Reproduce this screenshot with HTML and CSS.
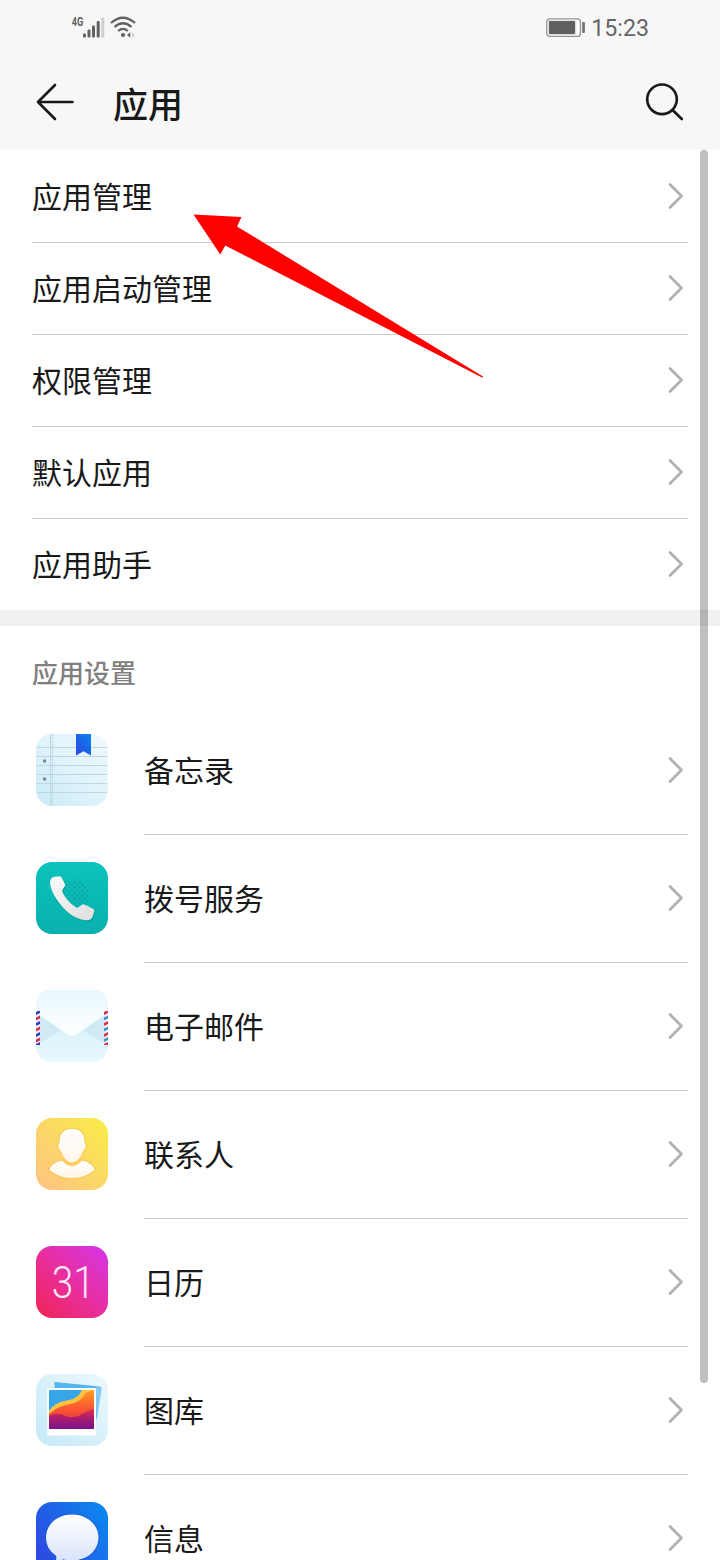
FILE: index.html
```html
<!DOCTYPE html>
<html lang="zh-CN">
<head>
    <meta charset="UTF-8">
    <meta name="viewport" content="width=device-width, initial-scale=1.0">
    <title>应用</title>
    <link rel="stylesheet" href="styles.css">
</head>
<body>
    <div class="status-bar">
        <svg class="signal" width="66" height="26" viewBox="0 0 66 26">
            <text x="1.7" y="12" class="network" textLength="11.5" lengthAdjust="spacingAndGlyphs">4G</text>
            <g fill="#626262">
                <rect x="13" y="19.5" width="3" height="4" rx="1"/>
                <rect x="17.5" y="15.5" width="3" height="8" rx="1"/>
                <rect x="22" y="11.5" width="3" height="12" rx="1"/>
                <rect x="26.7" y="7" width="3" height="16.5" rx="1"/>
            </g>
            <rect x="31.3" y="3.5" width="3" height="20" rx="1" fill="#cfcfcf"/>
            <g fill="none" stroke="#626262" stroke-width="2.3">
                <path d="M41 9Q53 -1.5 65 9"/>
                <path d="M44.5 13Q53 5.5 61.5 13"/>
                <path d="M48.2 17Q53 12.7 57.8 17"/>
            </g>
            <circle cx="53" cy="21" r="2.100" fill="#626262"/>
            <path d="M60.3 18.3v5.4L57 21z" fill="#626262"/>
            <path d="M62 18.3v5.4L65 21z" fill="#cfcfcf"/>
        </svg>
        <div class="status-right">
            <svg width="40" height="20" viewBox="0 0 40 20">
                <rect x=".8" y=".8" width="33.6" height="17.6" rx="3" fill="#fff" stroke="#929292" stroke-width="1.3"/>
                <rect x="2.3" y="2.3" width="28" height="14.6" rx="1" fill="#dcdcdc"/>
                <rect x="3" y="3" width="26" height="13" rx="1" fill="#606060"/>
                <rect x="36.2" y="4" width="2.7" height="11" rx="1" fill="#707070"/>
            </svg>
            <span class="time">15:23</span>
        </div>
    </div>

    <div class="header">
        <svg class="back" width="38" height="38" viewBox="0 0 38 38">
            <path d="M36.5 19H2M19 2L2 19l17 17" fill="none" stroke="#191919" stroke-width="2.6" stroke-linecap="round" stroke-linejoin="round"/>
        </svg>
        <h1>应用</h1>
        <svg class="search" width="40" height="40" viewBox="0 0 40 40">
            <circle cx="17" cy="17.3" r="14.8" fill="none" stroke="#191919" stroke-width="2.7"/>
            <path d="M27.5 28l9.3 9" fill="none" stroke="#191919" stroke-width="2.7" stroke-linecap="round"/>
        </svg>
    </div>

    <div class="menu">
        <div class="row"><span>应用管理</span><svg class="chevron" viewBox="0 0 16 28"><path d="M2 2.5L13.5 14 2 25.5"/></svg></div>
        <div class="row"><span>应用启动管理</span><svg class="chevron" viewBox="0 0 16 28"><path d="M2 2.5L13.5 14 2 25.5"/></svg></div>
        <div class="row"><span>权限管理</span><svg class="chevron" viewBox="0 0 16 28"><path d="M2 2.5L13.5 14 2 25.5"/></svg></div>
        <div class="row"><span>默认应用</span><svg class="chevron" viewBox="0 0 16 28"><path d="M2 2.5L13.5 14 2 25.5"/></svg></div>
        <div class="row"><span>应用助手</span><svg class="chevron" viewBox="0 0 16 28"><path d="M2 2.5L13.5 14 2 25.5"/></svg></div>
    </div>

    <div class="divider"></div>
    <h2>应用设置</h2>

    <div class="apps">
        <div class="app">
            <svg class="icon" viewBox="0 0 72 72">
                <defs>
                    <linearGradient id="memo" x1="1" y1="0" x2="0" y2="1"><stop offset="0" stop-color="#f0f9fd"/><stop offset=".5" stop-color="#dff3fb"/><stop offset="1" stop-color="#c8ebf8"/></linearGradient>
                    <linearGradient id="mark" x1="1" y1="0" x2="0" y2="1"><stop offset="0" stop-color="#0a84ef"/><stop offset="1" stop-color="#2d45df"/></linearGradient>
                </defs>
                <rect width="72" height="72" rx="16" fill="url(#memo)"/>
                <path d="M1 13.5h70M0 22.5h71M0 31.5h71M0 40.5h71M0 49.5h71M1 58.5h70" stroke="#bdd3dc" stroke-width=".9"/>
                <path d="M14.7 0v72" stroke="#b5cdd7" stroke-width=".9"/>
                <path d="M16.7 0v72" stroke="#b5cdd7" stroke-width=".8" stroke-dasharray="2 1.5"/>
                <circle cx="8.6" cy="27" r="1.7" fill="#718793"/>
                <circle cx="8.6" cy="45" r="1.7" fill="#718793"/>
                <path d="M40 0h15v21.5L47.5 17.3 40 21.5z" fill="url(#mark)"/>
            </svg>
            <div class="app-row"><span>备忘录</span><svg class="chevron" viewBox="0 0 16 28"><path d="M2 2.5L13.5 14 2 25.5"/></svg></div>
        </div>
        <div class="app">
            <svg class="icon" viewBox="0 0 72 72">
                <defs>
                    <linearGradient id="dial" x1="0" y1="0" x2="0" y2="1"><stop offset="0" stop-color="#0cc2bc"/><stop offset="1" stop-color="#09b1ad"/></linearGradient>
                    <linearGradient id="phone" x1="0" y1="0" x2="1" y2="1"><stop offset="0" stop-color="#fafafa"/><stop offset="1" stop-color="#dededf"/></linearGradient>
                    <pattern id="dots" width="5" height="5.4" patternUnits="userSpaceOnUse"><circle cx="1.2" cy="1.3" r=".75" fill="#078f8c"/><circle cx="3.7" cy="4" r=".75" fill="#078f8c"/></pattern>
                    <path id="handset" d="M18.500 14.800L23.500 14.200Q24.800 14.200 25.500 15.500L29 22Q29.600 23.600 28.400 25L26.600 27.400Q25.800 29 26.800 31Q31 39.500 39.500 45Q41 46 42.600 45L46 42.700Q47.500 41.900 49 42.700L57 46.800Q58.600 47.800 58.300 49.400L56.500 55Q54.600 59 49 58.200C39 57 31 50.500 24.500 42.500C18.500 35 14.300 27 14 20Q14.500 15.500 18.500 14.800z"/>
                </defs>
                <rect width="72" height="72" rx="16" fill="url(#dial)"/>
                <circle cx="36" cy="34" r="17" fill="url(#dots)"/>
                <use href="#handset" x=".8" y="1.300" fill="#06908d" opacity=".6"/>
                <use href="#handset" fill="url(#phone)"/>
            </svg>
            <div class="app-row"><span>拨号服务</span><svg class="chevron" viewBox="0 0 16 28"><path d="M2 2.5L13.5 14 2 25.5"/></svg></div>
        </div>
        <div class="app">
            <svg class="icon" viewBox="0 0 72 72">
                <defs>
                    <linearGradient id="mail" x1="0" y1="0" x2="0" y2="1"><stop offset="0" stop-color="#e2f5fc"/><stop offset=".5" stop-color="#daf1fa"/><stop offset="1" stop-color="#e8f8fd"/></linearGradient>
                    <linearGradient id="flap" x1="0" y1="0" x2="0" y2="1"><stop offset="0" stop-color="#e6f7fd"/><stop offset=".5" stop-color="#f4fbfe"/><stop offset="1" stop-color="#fff"/></linearGradient>
                    <clipPath id="mailclip"><path d="M0 21h4v34H0zM68 21h4v34h-4z"/></clipPath>
                </defs>
                <rect width="72" height="72" rx="16" fill="url(#mail)"/>
                <path d="M4 27l21 13L4 53zM68 27L47 40l21 13z" fill="#cfeaf4"/>
                <path d="M0 16Q0 0 16 0h40q16 0 16 16v6L41 44q-5 3.500-10 0L0 22z" fill="url(#flap)"/>
                <path d="M0 21h4v34H0zM68 21h4v34h-4z" fill="#f3f7fd"/>
                <g clip-path="url(#mailclip)" stroke-width="2.800">
                    <path d="M-1 24l6-3M-1 35l6-3M-1 46l6-3M-1 56l6-3" stroke="#2f3fc9"/>
                    <path d="M-1 29.5l6-3M-1 40.5l6-3M-1 51.5l6-3M67 24l6-3M67 35l6-3M67 46l6-3M67 56l6-3" stroke="#db3050"/>
                    <path d="M67 29.5l6-3M67 40.5l6-3M67 51l6-3" stroke="#4394c9"/>
                </g>
            </svg>
            <div class="app-row"><span>电子邮件</span><svg class="chevron" viewBox="0 0 16 28"><path d="M2 2.5L13.5 14 2 25.5"/></svg></div>
        </div>
        <div class="app">
            <svg class="icon" viewBox="0 0 72 72">
                <defs>
                    <linearGradient id="contact" x1="0" y1="1" x2="1" y2="0"><stop offset="0" stop-color="#ffc285"/><stop offset=".5" stop-color="#fbd866"/><stop offset="1" stop-color="#f9ee45"/></linearGradient>
                    <linearGradient id="person" x1="0" y1="0" x2="0" y2="1"><stop offset="0" stop-color="#fff"/><stop offset="1" stop-color="#fff6e6"/></linearGradient>
                </defs>
                <rect width="72" height="72" rx="16" fill="url(#contact)"/>
                <g fill="url(#person)" stroke="#f4bb45" stroke-opacity=".45" stroke-width="2.5" paint-order="stroke">
                    <path d="M26 42.5q5 5.500 10 5.500t10-5.500Q55.500 44.500 58.500 51q0 1.500-4 3.700Q47 60 36 60t-18.500-5.300q-4-2.200-4-3.700Q16.500 44.500 26 42.500z"/>
                    <path d="M36 11c8.500 0 12.800 4.500 12.500 14q1.700.5 1 4-.8 4-2.800 4.200C45.500 39 41 44.500 36 44.500S26.500 39 25.300 33.200Q23.300 33 22.500 29q-.7-3.500 1-4C23.200 15.500 27.500 11 36 11z"/>
                </g>
            </svg>
            <div class="app-row"><span>联系人</span><svg class="chevron" viewBox="0 0 16 28"><path d="M2 2.5L13.5 14 2 25.5"/></svg></div>
        </div>
        <div class="app">
            <svg class="icon" viewBox="0 0 72 72">
                <defs>
                    <linearGradient id="cal" x1="0" y1="1" x2="1" y2="0"><stop offset="0" stop-color="#f02352"/><stop offset=".5" stop-color="#e82fa0"/><stop offset="1" stop-color="#d535ea"/></linearGradient>
                </defs>
                <rect width="72" height="72" rx="16" fill="url(#cal)"/>
                <text x="15.800" y="51.500" class="day" textLength="43" lengthAdjust="spacingAndGlyphs">31</text>
            </svg>
            <div class="app-row"><span>日历</span><svg class="chevron" viewBox="0 0 16 28"><path d="M2 2.5L13.5 14 2 25.5"/></svg></div>
        </div>
        <div class="app">
            <svg class="icon" viewBox="0 0 72 72">
                <defs>
                    <linearGradient id="gallery" x1="1" y1="0" x2="0" y2="1"><stop offset="0" stop-color="#edf8fd"/><stop offset="1" stop-color="#c4e9f7"/></linearGradient>
                    <linearGradient id="dune" x1="0" y1="0" x2="0" y2="1"><stop offset="0" stop-color="#ff9d1e"/><stop offset=".45" stop-color="#fb5a31"/><stop offset="1" stop-color="#dc2448"/></linearGradient>
                    <linearGradient id="night" x1="0" y1="0" x2="0" y2="1"><stop offset="0" stop-color="#d8304c"/><stop offset=".5" stop-color="#a81b70"/><stop offset="1" stop-color="#79148c"/></linearGradient>
                </defs>
                <rect width="72" height="72" rx="16" fill="url(#gallery)"/>
                <path d="M18.5 8l45.500 4.500-3 32H19z" fill="#55b5ee"/>
                <path d="M60 12.500l6 .7-5.500 34z" fill="#86cbf3"/>
                <path d="M11.300 14H60v47.500H11.300z" fill="#fff"/>
                <path d="M13 16h45v39H13z" fill="#37a6e8"/>
                <path d="M13 37Q19 28 31 26.500q11-1 15-10.500h12v39H13z" fill="#ffc542"/>
                <path d="M13 40q9-8 19-9.500 13-2 18-12l8-2.500v39H13z" fill="url(#dune)"/>
                <path d="M13 42q8-4 14-1 11 5 19-1 6-4 12-5v20H13z" fill="url(#night)"/>
            </svg>
            <div class="app-row"><span>图库</span><svg class="chevron" viewBox="0 0 16 28"><path d="M2 2.5L13.5 14 2 25.5"/></svg></div>
        </div>
        <div class="app">
            <svg class="icon" viewBox="0 0 72 72">
                <defs>
                    <linearGradient id="sms" x1="0" y1=".8" x2="1" y2=".2"><stop offset="0" stop-color="#3046df"/><stop offset="1" stop-color="#0b86ef"/></linearGradient>
                    <linearGradient id="bubble" x1="0" y1="0" x2="0" y2="1"><stop offset="0" stop-color="#fff"/><stop offset="1" stop-color="#d9e2fb"/></linearGradient>
                </defs>
                <rect width="72" height="72" rx="16" fill="url(#sms)"/>
                <path d="M36 12.500c15 0 26.500 10 26.500 23S51 58.500 36 58.500q-5 0-9-1.300-3 3-8 3.500 2-3.500 1-7Q10 47 10 35.500c0-13 11-23 26-23z" fill="url(#bubble)" stroke="#1c50d0" stroke-opacity=".5" stroke-width="2" paint-order="stroke"/>
            </svg>
            <div class="app-row"><span>信息</span><svg class="chevron" viewBox="0 0 16 28"><path d="M2 2.5L13.5 14 2 25.5"/></svg></div>
        </div>
    </div>

    <div class="scrollbar"></div>
    <svg class="pointer" width="292" height="166" viewBox="0 0 292 166">
        <polygon points="0.500,0.500 48.500,3 44,12.500 290,162.500 289.500,163.800 32.300,31.500 27.300,40.500" fill="#f00"/>
    </svg>
</body>
</html>
```
FILE: styles.css
```css
* {
    box-sizing: border-box;
}

body {
    position: relative;
    margin: 0;
    height: 1560px;
    overflow: hidden;
    background: #fff;
    color: #191919;
    font-family: "Noto Sans CJK SC", sans-serif;
}

svg {
    display: block;
    flex: none;
}

.status-bar {
    display: flex;
    justify-content: space-between;
    align-items: center;
    height: 56px;
    padding: 0 71px 0 70px;
    background: #f7f7f7;
}

.signal {
    margin-top: -2px;
}

.network {
    font: bold 12.5px Roboto, sans-serif;
    fill: #626262;
}

.status-right {
    display: flex;
    align-items: center;
    gap: 5px;
}

.time {
    font-family: Roboto, sans-serif;
    font-size: 23.2px;
    line-height: 28px;
    color: #666;
}

.header {
    display: flex;
    align-items: center;
    height: 94px;
    padding: 0 35px 2px 36px;
    background: #f7f7f7;
}

h1 {
    flex: 1;
    margin: 1px 0 0 39px;
    font-size: 35px;
    line-height: 50px;
    font-weight: 500;
}

.menu {
    padding: 0 32px;
}

.row {
    display: flex;
    justify-content: space-between;
    align-items: center;
    height: 92px;
    padding-right: 4px;
    font-size: 30px;
    line-height: 44px;
}

.row span,
.app-row span {
    margin-top: -2px;
}

.row + .row {
    border-top: 1px solid #c8c8c8;
    padding-bottom: 1px;
}

.chevron {
    width: 16px;
    height: 28px;
    fill: none;
    stroke: #b0b0b0;
    stroke-width: 2.7;
    stroke-linecap: round;
    stroke-linejoin: round;
}

.divider {
    height: 16px;
    background: #f1f1f1;
}

h2 {
    margin: 0;
    height: 80px;
    padding: 7px 32px 0;
    font-size: 26px;
    line-height: 78px;
    font-weight: 500;
    color: #808080;
}

.app {
    display: flex;
    align-items: center;
    gap: 36px;
    height: 128px;
    padding: 0 32px 0 36px;
}

.icon {
    width: 72px;
    height: 72px;
}

.app-row {
    display: flex;
    flex: 1;
    justify-content: space-between;
    align-items: center;
    height: 128px;
    padding-right: 4px;
    font-size: 30px;
    line-height: 44px;
}

.app + .app .app-row {
    border-top: 1px solid #c8c8c8;
    padding-bottom: 1px;
}

.day {
    font-family: Roboto, sans-serif;
    font-size: 44px;
    font-weight: 300;
    fill: #fde6f8;
}

.scrollbar {
    position: absolute;
    top: 150px;
    right: 12px;
    width: 8px;
    height: 1233px;
    border-radius: 4px;
    background: rgba(0, 0, 0, 0.25);
}

.pointer {
    position: absolute;
    top: 214px;
    left: 193px;
}
```
